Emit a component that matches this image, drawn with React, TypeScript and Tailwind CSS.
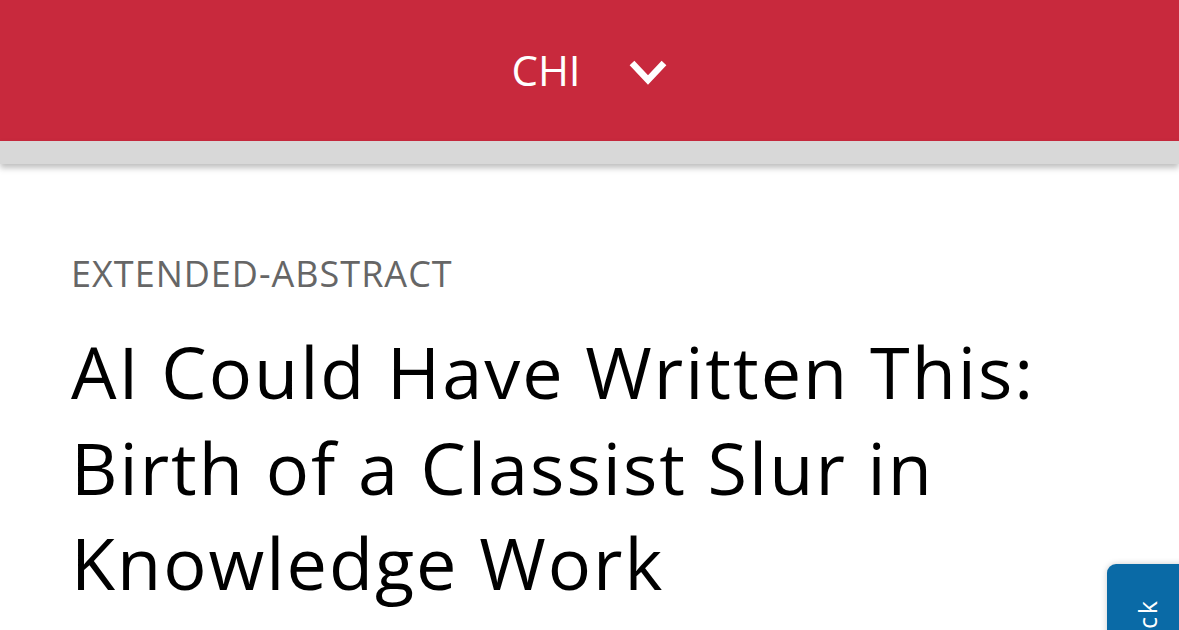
import React from "react";

function Chevron() {
  return (
    <svg width="40" height="28" viewBox="0 0 40 28" className="mt-[4px]">
      <polyline points="4,5 20,22 36,5" fill="none" stroke="white" strokeWidth="6.5" strokeLinecap="butt" strokeLinejoin="miter" />
    </svg>
  );
}

export default function App() {
  return (
    <div className="relative h-[630px] w-full overflow-hidden bg-white font-['Open_Sans',sans-serif]">
      <header className="flex h-[141px] items-center justify-center gap-[47px] bg-[#c8293d] pb-[1px]">
        <span className="text-[42px] leading-none text-white">CHI</span>
        <Chevron />
      </header>
      <div className="h-[23px] w-full bg-[#d8d8d8] shadow-[0_4px_6px_rgba(0,0,0,0.25)]" />

      <main className="pl-[71px] pt-[86px]">
        <p className="text-[36px] leading-[48px] tracking-[1px] text-[#666666]">EXTENDED-ABSTRACT</p>
        <h1 className="mt-[26px] max-w-[1060px] text-[72px] font-normal leading-[95.5px] tracking-[2px] text-black">
          AI Could Have Written This: Birth of a Classist Slur in Knowledge Work
        </h1>
      </main>

      <button className="absolute left-[1107px] top-[564px] flex h-[160px] w-[90px] items-start justify-start rounded-tl-[9px] bg-[#0a6aa6] shadow-[0_0_6px_rgba(0,0,0,0.2)]">
        <span className="ml-[28px] mt-[34px] inline-block rotate-180 text-[25px] leading-[25px] tracking-[3px] text-white [writing-mode:vertical-rl]">
          Feedback
        </span>
      </button>
    </div>
  );
}
